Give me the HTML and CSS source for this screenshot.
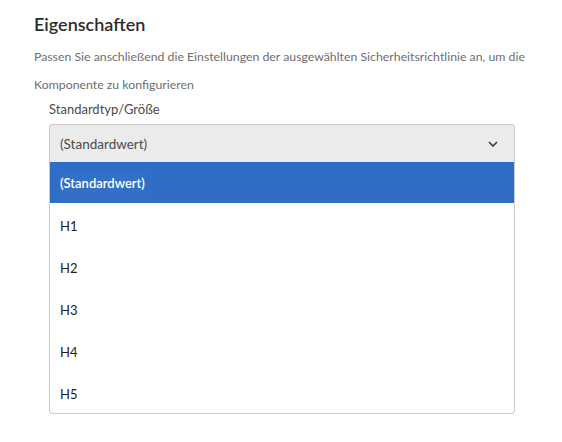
FILE: index.html
```html
<!DOCTYPE html>
<html lang="de">
<head>
<meta charset="utf-8">
<link rel="stylesheet" href="styles.css">
</head>
<body>
<div class="panel">
  <h2 class="title">Eigenschaften</h2>
  <p class="desc">Passen Sie anschließend die Einstellungen der ausgewählten Sicherheitsrichtlinie an, um die Komponente zu konfigurieren</p>
  <div class="field">
    <div class="label">Standardtyp/Größe</div>
    <div class="select">
      <span class="value">(Standardwert)</span>
      <svg class="chev" width="10" height="6" viewBox="0 0 10 6"><path d="M1 1 L5 5 L9 1" fill="none" stroke="#3a3a3a" stroke-width="1.6"/></svg>
    </div>
    <ul class="list">
      <li class="item selected"><span class="hl">(Standardwert)</span></li>
      <li class="item">H1</li>
      <li class="item">H2</li>
      <li class="item">H3</li>
      <li class="item">H4</li>
      <li class="item">H5</li>
    </ul>
  </div>
</div>
</body>
</html>
```
FILE: styles.css
```css
html, body {
  margin: 0;
  padding: 0;
  background: #ffffff;
}
body {
  font-family: Lato, "Noto Sans", sans-serif;
}
.panel {
  padding: 12px 0 0 34px;
  width: 500px;
}
.title {
  margin: 0;
  font-size: 18px;
  line-height: 24px;
  font-weight: 600;
  color: #2c2c2c;
}
.desc {
  margin: 7px 0 0 0;
  font-size: 12.3px;
  line-height: 28px;
  color: #6e6e6e;
}
.field {
  margin-left: 15px;
  width: 466px;
}
.label {
  font-size: 13px;
  line-height: 20px;
  color: #4b4b4b;
  margin-bottom: 5px;
}
.select {
  box-sizing: border-box;
  height: 38px;
  background: #ebebeb;
  border: 1px solid #cacaca;
  border-bottom: none;
  border-radius: 4px 4px 0 0;
  display: flex;
  align-items: center;
  justify-content: space-between;
  padding: 0 16px 0 10px;
}
.value {
  font-size: 13.5px;
  color: #4b4b4b;
}
.chev {
  display: block;
}
.list {
  list-style: none;
  margin: 0;
  padding: 0;
  border: 1px solid #cacaca;
  border-top: none;
  border-radius: 0 0 4px 4px;
  overflow: hidden;
}
.item {
  box-sizing: border-box;
  height: 42px;
  display: flex;
  align-items: center;
  padding: 3px 0 0 10px;
  font-size: 13px;
  color: #222222;
}
.item.selected {
  height: 41px;
  background: #2f6dc6;
  color: #ffffff;
  font-weight: 600;
  margin: 0 -1px;
  padding: 1px 0 0 11px;
}
.hl {
  background: #3470c6;
  padding: 2px 0;
}
```
